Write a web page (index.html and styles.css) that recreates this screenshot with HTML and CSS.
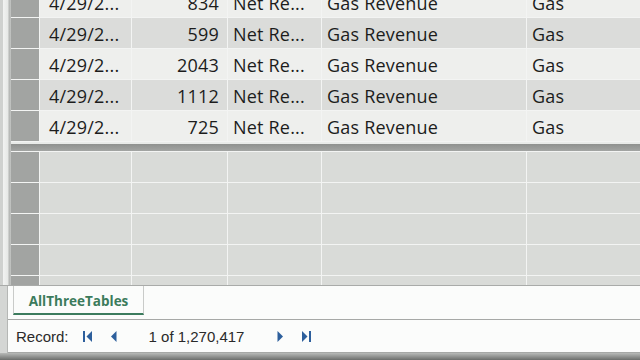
FILE: index.html
```
<!DOCTYPE html>
<html lang="en">

<head>
    <meta charset="UTF-8">
    <title>AllThreeTables</title>
    <link rel="stylesheet" href="styles.css">
</head>

<body>
    <div class="sheet">
        <div class="edge"></div>
        <div class="table">
            <div class="rows data">
                <div class="row light">
                    <div class="sel"></div>
                    <div class="c">4/29/2...</div>
                    <div class="c num">834</div>
                    <div class="c">Net Re...</div>
                    <div class="c">Gas Revenue</div>
                    <div class="c">Gas</div>
                </div>
                <div class="row dark">
                    <div class="sel"></div>
                    <div class="c">4/29/2...</div>
                    <div class="c num">599</div>
                    <div class="c">Net Re...</div>
                    <div class="c">Gas Revenue</div>
                    <div class="c">Gas</div>
                </div>
                <div class="row light">
                    <div class="sel"></div>
                    <div class="c">4/29/2...</div>
                    <div class="c num">2043</div>
                    <div class="c">Net Re...</div>
                    <div class="c">Gas Revenue</div>
                    <div class="c">Gas</div>
                </div>
                <div class="row dark">
                    <div class="sel"></div>
                    <div class="c">4/29/2...</div>
                    <div class="c num">1112</div>
                    <div class="c">Net Re...</div>
                    <div class="c">Gas Revenue</div>
                    <div class="c">Gas</div>
                </div>
                <div class="row light">
                    <div class="sel"></div>
                    <div class="c">4/29/2...</div>
                    <div class="c num">725</div>
                    <div class="c">Net Re...</div>
                    <div class="c">Gas Revenue</div>
                    <div class="c">Gas</div>
                </div>
            </div>
            <div class="split"></div>
            <div class="rows empty">
                <div class="row"><div class="sel"></div><div class="c"></div><div class="c"></div><div class="c"></div><div class="c"></div><div class="c"></div></div>
                <div class="row"><div class="sel"></div><div class="c"></div><div class="c"></div><div class="c"></div><div class="c"></div><div class="c"></div></div>
                <div class="row"><div class="sel"></div><div class="c"></div><div class="c"></div><div class="c"></div><div class="c"></div><div class="c"></div></div>
                <div class="row"><div class="sel"></div><div class="c"></div><div class="c"></div><div class="c"></div><div class="c"></div><div class="c"></div></div>
                <div class="row"><div class="sel"></div><div class="c"></div><div class="c"></div><div class="c"></div><div class="c"></div><div class="c"></div></div>
            </div>
        </div>
    </div>

    <div class="lower">
        <div class="tabs">
            <div class="tab">AllThreeTables</div>
        </div>
        <div class="recbar">
            <span class="label">Record:</span>
            <svg class="nav first" width="11" height="11" viewBox="0 0 11 11"><rect x="0" y="0" width="2" height="11" fill="#2d5f9c"/><path d="M9 0 L3.5 5.5 L9 11 Z" fill="#2d5f9c"/></svg>
            <svg class="nav prev" width="7" height="11" viewBox="0 0 7 11"><path d="M6.5 0 L1 5.5 L6.5 11 Z" fill="#2d5f9c"/></svg>
            <span class="count">1 of 1,270,417</span>
            <svg class="nav next" width="7" height="11" viewBox="0 0 7 11"><path d="M0.5 0 L6 5.5 L0.5 11 Z" fill="#2d5f9c"/></svg>
            <svg class="nav last" width="11" height="11" viewBox="0 0 11 11"><path d="M2 0 L7.5 5.5 L2 11 Z" fill="#2d5f9c"/><rect x="9" y="0" width="2" height="11" fill="#2d5f9c"/></svg>
        </div>
    </div>
    <div class="foot"></div>
</body>

</html>
```

FILE: styles.css
```
body {
    margin: 0;
    width: 640px;
    height: 360px;
    overflow: hidden;
    background: #d4d6d4;
    font-family: 'Open Sans', 'Noto Sans', sans-serif;
    display: flex;
    flex-direction: column;
}

.sheet {
    height: 285px;
    flex-shrink: 0;
    display: flex;
    overflow: hidden;
    border-bottom: 1px solid #a9aba9;
}

/* window border on the left */
.edge {
    width: 11px;
    flex-shrink: 0;
    background: linear-gradient(90deg, #cfd1cf 0, #cfd1cf 3px, #f2f3f2 3px, #e6e8e6 8px, #b4b6b4 9px, #c2c4c2 11px);
}

.table {
    flex: 1;
    display: flex;
    flex-direction: column;
    background: #f3f4f3;
}

.rows {
    display: flex;
    flex-direction: column;
    gap: 1px;
}

.data {
    margin-top: -13px;
    padding-bottom: 1px;
}

.empty {
    padding-top: 1px;
}

.row {
    display: grid;
    grid-template-columns: 28px 91px 95px 93px 204px 1fr;
    column-gap: 1px;
    height: 30px;
    flex-shrink: 0;
}

.sel {
    background: #a2a4a2;
}

.c {
    padding: 0 5px;
    font-size: 18px;
    line-height: 33px;
    letter-spacing: 0.2px;
    color: #1c1c1c;
    white-space: nowrap;
    overflow: hidden;
}

.c:nth-child(2) {
    padding-left: 9px;
}

.num {
    text-align: right;
    padding-right: 8px;
}

.light .c {
    background: #eeefed;
}

.dark .c {
    background: #dbdcda;
}

.empty .c {
    background: #d9dbd8;
}

.split {
    height: 7px;
    flex-shrink: 0;
    border-top: 2px solid #e9ebe9;
    background: linear-gradient(#8f918f, #a3a5a3);
}

.lower {
    margin-left: 7px;
    border-left: 1px solid #b5b7b5;
    background: #fbfcfb;
}

.tabs {
    height: 33px;
    padding-left: 5px;
    border-bottom: 1px solid #a6a8a6;
}

.tab {
    width: 129px;
    height: 27px;
    border-left: 1px solid #c9cbc9;
    border-right: 1px solid #c9cbc9;
    border-bottom: 2px solid #3c7c5e;
    color: #3b7b5c;
    font-family: 'Open Sans', sans-serif;
    font-weight: bold;
    font-size: 13.5px;
    line-height: 30px;
    text-align: center;
}

.recbar {
    height: 32px;
    display: flex;
    align-items: center;
    padding-left: 8px;
    border-bottom: 1px solid #a6a8a6;
    font-family: 'Liberation Sans', Arial, sans-serif;
    font-size: 15px;
    color: #2a2a2a;
}

.first {
    margin-left: 14px;
}

.prev {
    margin-left: 16px;
}

.count {
    margin-left: 32px;
}

.next {
    margin-left: 33px;
}

.last {
    margin-left: 16px;
}

.foot {
    flex: 1;
    background: linear-gradient(#b8bab8, #6c6e6c);
}
```
